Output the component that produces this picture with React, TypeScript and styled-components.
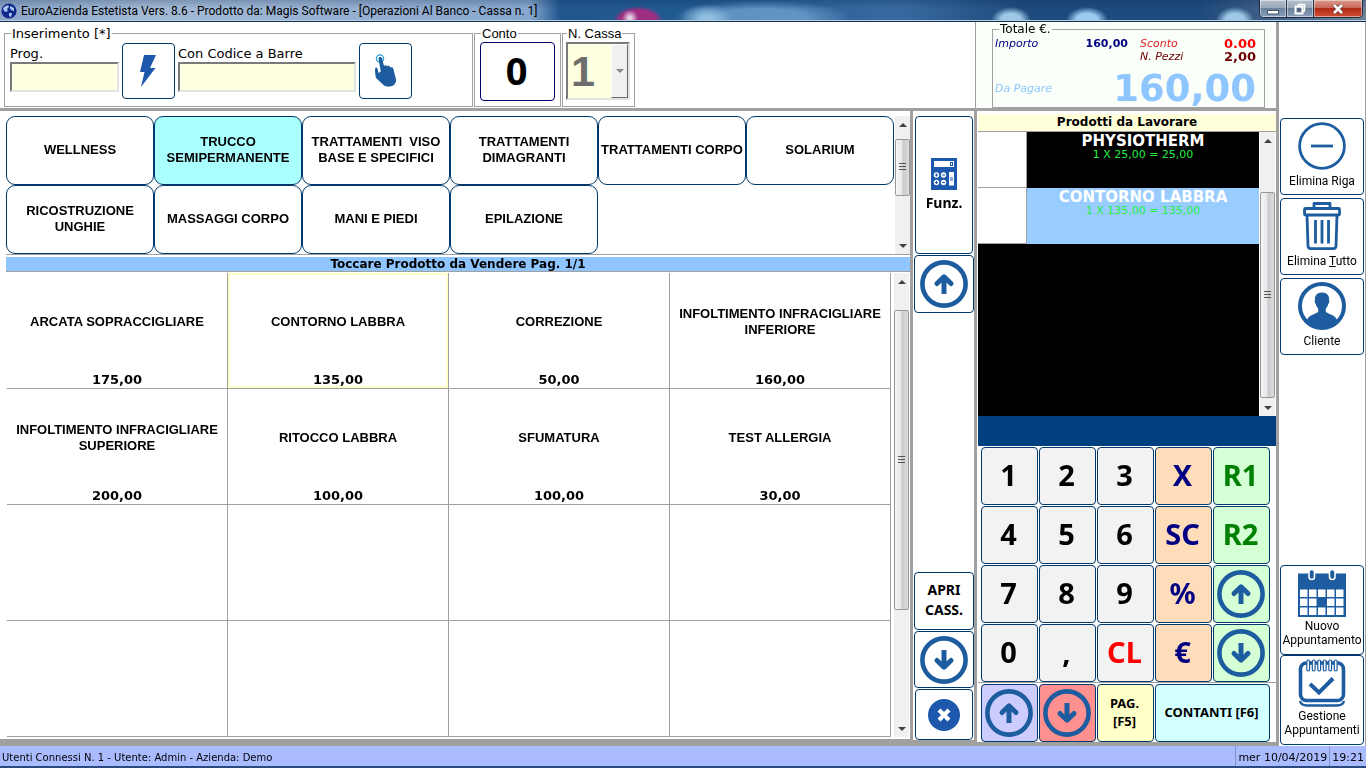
import React from "react";
import styled, { createGlobalStyle, css } from "styled-components";

const INK = "#00396b";
const BLUE = "#1c5c9f";
const GREY = "#a0a0a0";
const VERDANA = `Verdana, "DejaVu Sans", sans-serif`;
const ARIAL = `"Liberation Sans", Arial, sans-serif`;
const SEGOE = `"Noto Sans", "Open Sans", sans-serif`;
const TAHOMA = `Roboto, "Noto Sans", sans-serif`;

const GlobalStyle = createGlobalStyle`
  *, *::before, *::after { box-sizing: border-box; }
  body { margin: 0; background: #fff; color: #000; font-family: ${VERDANA}; font-size: 12px; }
  button, input, select { font: inherit; color: inherit; margin: 0; }
  button { padding: 0; cursor: pointer; }
`;

/* ---------- window ---------- */

const Window = styled.div`
  display: flex;
  flex-direction: column;
  min-height: 100vh;
`;

const TitleBar = styled.header`
  display: flex;
  align-items: center;
  height: 22px;
  padding: 0 3px 0 1px;
  border-bottom: 1px solid #14304f;
  box-shadow: inset 0 -1px 0 #b9cfe6;
  background:
    linear-gradient(rgba(10, 40, 80, 0.25), transparent 40%),
    radial-gradient(ellipse 8px 8px at 630px 18px, #e6cfe6 20%, transparent 100%),
    radial-gradient(ellipse 25px 14px at 638px 20px, #a02f82 70%, transparent 100%),
    radial-gradient(ellipse 26px 14px at 706px 18px, rgba(160, 205, 235, 0.8) 20%, transparent 100%),
    radial-gradient(ellipse 90px 18px at 762px 18px, rgba(110, 160, 205, 0.8) 50%, transparent 100%),
    radial-gradient(ellipse 20px 13px at 1011px 20px, #9cc8e6 50%, transparent 100%),
    radial-gradient(ellipse 21px 13px at 1087px 20px, #9ccbf2 50%, transparent 100%),
    radial-gradient(ellipse 19px 13px at 1235px 20px, #9cc8e6 50%, transparent 100%),
    linear-gradient(90deg, #8da6c8 0, #a3bad6 150px, #93add0 400px, #86a7cd 530px, #21578f 560px, #205990 680px, #386a9f 900px, #1f4a7d 1020px, #1f4a7d 1200px, #6f8096 100%);
`;

const TitleText = styled.h1`
  flex: 1;
  margin: 0 0 0 4px;
  font: 12px/20px ${TAHOMA};
  white-space: nowrap;
`;

const WindowButtons = styled.div`
  display: flex;
  align-self: flex-start;
  height: 18px;
  border: 1px solid #1c2f47;
  border-top: 0;
  border-radius: 0 0 5px 5px;
  overflow: hidden;
`;

const WindowButton = styled.button<{ $close?: boolean }>`
  display: flex;
  align-items: center;
  justify-content: center;
  width: ${(p) => (p.$close ? 48 : 27)}px;
  border: 0;
  border-right: ${(p) => (p.$close ? "0" : "1px solid #1c2f47")};
  box-shadow: inset 0 0 0 1px rgba(255, 255, 255, 0.45);
  background: ${(p) =>
    p.$close
      ? "linear-gradient(#d99a8c 0, #c9685a 45%, #b02a17 50%, #cf4f33 100%)"
      : "linear-gradient(#b4bfcc 0, #98a8ba 45%, #6c819b 50%, #8aa0ba 100%)"};
`;

const Body = styled.main`
  display: grid;
  grid-template-columns: minmax(0, 1fr) 87px;
  flex: 1;
`;

const Frame = styled.div`
  display: flex;
  flex-direction: column;
  border-right: 3px solid ${GREY};
  border-bottom: 4px solid ${GREY};
`;

/* ---------- top strip ---------- */

const TopStrip = styled.section`
  display: flex;
  height: 89px;
  border-bottom: 3px solid ${GREY};
`;

const Groups = styled.div`
  display: flex;
  flex: 1;
  gap: 1px;
  padding: 3px 0 0 4px;
`;

const Group = styled.fieldset<{ $width: number; $pad: number; $arial?: boolean }>`
  display: flex;
  width: ${(p) => p.$width}px;
  height: 82px;
  min-width: 0;
  margin: 0;
  padding: 0 ${(p) => p.$pad}px;
  border: 1px solid ${GREY};
  font-family: ${(p) => (p.$arial ? ARIAL : VERDANA)};

  legend {
    padding: 0 1px;
    margin-left: 1px;
    font-size: 13px;
    line-height: 17px;
  }
`;

const EntryRow = styled.div`
  display: flex;
  align-items: flex-start;
  gap: 3px;
`;

const Field = styled.label<{ $width: number }>`
  display: flex;
  flex-direction: column;
  width: ${(p) => p.$width}px;
  padding-top: 4px;
  font-size: 13px;
  line-height: 16px;

  input {
    height: 30px;
    width: 100%;
    padding: 0 2px;
    border: 2px solid;
    border-color: #7a7a7a #e3e3e3 #e3e3e3 #7a7a7a;
    border-radius: 0;
    background: #ffffe1;
    outline: 0;
    font-size: 16px;
  }
`;

const framed = css`
  display: flex;
  align-items: center;
  justify-content: center;
  border: 1px solid ${INK};
  border-radius: 4px;
  background: #fff;
`;

const EntryButton = styled.button`
  ${framed}
  width: 53px;
  height: 56px;
  margin-top: 1px;
`;

const AccountButton = styled.button`
  ${framed}
  width: 76px;
  height: 59px;
  padding: 0 2px 4px 0;
  border-color: #000066;
  font: bold 38px/50px ${SEGOE};
`;

const TillPicker = styled.div`
  display: flex;
  width: 64px;
  height: 58px;
  border: 2px solid;
  border-color: #7a7a7a #e3e3e3 #e3e3e3 #7a7a7a;
  background: #ffffe1;

  select {
    flex: 1;
    min-width: 0;
    padding: 0 0 0 3px;
    border: 0;
    background: transparent;
    appearance: none;
    color: #6d6d6d;
    opacity: 1;
    font: bold 43px/54px ${ARIAL};
  }
`;

const TillArrow = styled.span`
  display: flex;
  align-items: center;
  justify-content: center;
  width: 17px;
  border: 1px solid;
  border-color: #fff #696969 #696969 #fff;
  background: #f0f0f0;
`;

const TotalsArea = styled.div`
  width: 301px;
  padding: 0 11px 0 16px;
  border-left: 1px solid ${GREY};
  background: #fafffa;
`;

const Totals = styled.fieldset`
  display: grid;
  grid-template-columns: 84px 1fr 60px 56px;
  grid-template-rows: 13px 13px 1fr;
  height: 86px;
  min-width: 0;
  margin: 0;
  padding: 1px 8px 0 2px;
  border: 1px solid ${GREY};

  legend {
    padding: 0 1px;
    margin-left: 4px;
    font-size: 12px;
    line-height: 14px;
  }
`;

const TotalLabel = styled.span<{ $color: string; $col?: number }>`
  grid-column: ${(p) => p.$col ?? "auto"};
  color: ${(p) => p.$color};
  font-size: 11px;
  font-style: italic;
  line-height: 13px;
  white-space: nowrap;
`;

const TotalValue = styled.output<{ $color: string; $size: number }>`
  color: ${(p) => p.$color};
  font-size: ${(p) => p.$size}px;
  font-weight: 700;
  line-height: 13px;
  text-align: right;
`;

const DueRow = styled.div`
  display: flex;
  grid-column: 1 / -1;
  align-items: center;
  justify-content: space-between;
  padding-top: 7px;
  color: #8fc6ff;

  ${TotalValue} { line-height: 36px; }
`;

const Spaced = styled(TotalValue)`
  padding-right: 12px;
`;

/* ---------- workspace ---------- */

const Workspace = styled.div`
  display: grid;
  grid-template-columns: minmax(0, 1fr) 64px 299px;
  flex: 1;
`;

const Catalogue = styled.section`
  display: flex;
  flex-direction: column;
  padding: 5px 0 2px 6px;
  border-right: 3px solid ${GREY};
  border-bottom: 3px solid ${GREY};
`;

const CategoryRow = styled.div`
  display: flex;
  gap: 1px;
  border-bottom: 1px solid ${GREY};
`;

const CategoryGrid = styled.div`
  display: grid;
  flex: 1;
  grid-template-columns: repeat(6, minmax(0, 1fr));
  grid-auto-rows: 69px;
`;

const Category = styled.button<{ $active?: boolean }>`
  padding-bottom: 2px;
  border: 1px solid ${INK};
  border-radius: 9px;
  background: ${(p) => (p.$active ? "#aaffff" : "#fff")};
  font: bold 13px/16px ${ARIAL};
  white-space: pre;
`;

const Band = styled.h2<{ $tone: "blue" | "cream" }>`
  margin: 0;
  border-bottom: 1px solid ${GREY};
  background: ${(p) => (p.$tone === "blue" ? "#8fc6ff" : "#ffffd9")};
  font-size: 12px;
  text-align: center;
  line-height: ${(p) => (p.$tone === "blue" ? 14 : 17)}px;
  margin-top: ${(p) => (p.$tone === "blue" ? 2 : 3)}px;
`;

const ProductRow = styled.div`
  display: flex;
  flex: 1;
  gap: 3px;
  padding: 1px 1px 0 1px;
`;

const ProductGrid = styled.div`
  display: grid;
  flex: 1;
  grid-template-columns: repeat(4, minmax(0, 1fr));
  grid-template-rows: repeat(4, minmax(116px, 1fr));
`;

const Product = styled.button<{ $active?: boolean }>`
  display: flex;
  flex-direction: column;
  border: 0;
  border-right: 1px solid ${GREY};
  border-bottom: 1px solid ${GREY};
  background: #fff;
  box-shadow: ${(p) => (p.$active ? "inset 0 0 0 2px #ffffc8" : "none")};
`;

const ProductName = styled.span`
  display: flex;
  flex: 1;
  align-items: center;
  justify-content: center;
  width: 100%;
  padding-bottom: 2px;
  font: bold 13px/16px ${ARIAL};
  white-space: pre;
`;

const ProductPrice = styled.span`
  width: 100%;
  font-size: 13px;
  font-weight: 700;
  line-height: 16px;
`;

/* ---------- scroll bar ---------- */

const Scroll = styled.div`
  display: flex;
  flex-direction: column;
  align-items: center;
  width: 15px;
  background: #f0f0f0;
`;

const ScrollEnd = styled.span`
  display: flex;
  align-items: center;
  justify-content: center;
  height: 17px;
`;

const ScrollGap = styled.span<{ $grow: number }>`
  flex: ${(p) => p.$grow} 0 0;
`;

const Thumb = styled.span<{ $grow: number }>`
  display: flex;
  align-items: center;
  justify-content: center;
  flex: ${(p) => p.$grow} 0 0;
  width: 15px;
  border: 1px solid #979797;
  border-radius: 2px;
  background: linear-gradient(90deg, #f6f6f6 0, #e8e8ea 45%, #c9c9cd 55%, #dcdcdf 100%);
`;

function ScrollBar({ parts }: { parts: [number, number, number] }) {
  return (
    <Scroll aria-hidden>
      <ScrollEnd>
        <svg width="8" height="4"><path d="M0 4 L4 0 L8 4Z" fill="#404040" /></svg>
      </ScrollEnd>
      <ScrollGap $grow={parts[0]} />
      <Thumb $grow={parts[1]}>
        <svg width="7" height="8"><path d="M0 .5H7M0 3.5H7M0 6.5H7" stroke="#555" /></svg>
      </Thumb>
      <ScrollGap $grow={parts[2]} />
      <ScrollEnd>
        <svg width="8" height="4"><path d="M0 0 L4 4 L8 0Z" fill="#404040" /></svg>
      </ScrollEnd>
    </Scroll>
  );
}

/* ---------- tool column ---------- */

const ToolColumn = styled.nav`
  display: flex;
  flex-direction: column;
  gap: 1px;
  padding: 5px 0 0 1px;
  border-right: 3px solid ${GREY};
  border-bottom: 2px solid ${GREY};
`;

const ToolButton = styled.button<{ $height: number; $inset?: boolean; $push?: boolean }>`
  ${framed}
  flex-direction: column;
  gap: 3px;
  height: ${(p) => p.$height}px;
  padding-bottom: ${(p) => (p.$push ? 2 : 0)}px;
  margin: ${(p) => (p.$push ? "auto" : "0")} ${(p) => (p.$inset ? 1 : 0)}px 0;
  font: bold 14px/20px ${SEGOE};
  white-space: pre;
`;

/* ---------- till ---------- */

const Till = styled.section`
  display: flex;
  flex-direction: column;
  padding-left: 1px;
`;

const Receipt = styled.div`
  display: flex;
  flex: 1;
  padding-right: 1px;
`;

const ReceiptLines = styled.ul`
  flex: 1;
  margin: 0 1px 0 0;
  padding: 0;
  background: #000;
  list-style: none;
`;

const ReceiptLine = styled.li<{ $active?: boolean }>`
  display: flex;
  height: 56px;
  background: ${(p) => (p.$active ? "#99ccff" : "#000")};

  &::before {
    content: "";
    width: 49px;
    border-right: 1px solid ${GREY};
    border-bottom: 1px solid ${GREY};
    background: #fff;
  }
`;

const ReceiptText = styled.div`
  display: flex;
  flex: 1;
  flex-direction: column;
  align-items: center;
  padding-top: 2px;
  color: #22ee44;
  font-size: 11px;
  line-height: 12px;

  strong {
    color: #fff;
    font-size: 15px;
    line-height: 15px;
  }
`;

const Display = styled.div`
  height: 30px;
  background: #003f80;
`;

const Keys = styled.div<{ $last?: boolean }>`
  display: grid;
  grid-template-columns: repeat(5, 57px);
  grid-auto-rows: 58px;
  gap: 1px;
  padding: 1px 3px 0;
  border-top: ${(p) => (p.$last ? `1px solid ${GREY}` : "0")};
`;

const Key = styled.button<{ $bg?: string; $fg?: string; $small?: boolean; $wide?: boolean }>`
  ${framed}
  grid-column: ${(p) => (p.$wide ? "span 2" : "auto")};
  padding: 0 2px 2px 0;
  background: ${(p) => p.$bg ?? "#f2f2f2"};
  color: ${(p) => p.$fg ?? "#000"};
  font: bold ${(p) => (p.$small ? "13px/18px" : "29px/40px")} ${SEGOE};
  white-space: pre;
`;

const IconKey = styled(Key)`
  padding: 0 1px 0 0;
`;

/* ---------- side bar ---------- */

const SideBar = styled.nav`
  display: flex;
  flex-direction: column;
  gap: 3px;
  padding: 96px 1px 1px;
  border-right: 1px solid ${GREY};
`;

const SideButton = styled.button<{ $tall?: boolean }>`
  ${framed}
  flex-direction: column;
  justify-content: flex-start;
  height: ${(p) => (p.$tall ? 90 : 77)}px;
  padding-top: 3px;
  gap: ${(p) => (p.$tall ? 2 : 4)}px;
  font: 12px/14px ${TAHOMA};
  white-space: pre;
`;

const SideBottom = styled.div`
  display: flex;
  flex-direction: column;
  margin-top: auto;
`;

/* ---------- status ---------- */

const Status = styled.footer`
  display: flex;
  height: 22px;
  border-bottom: 2px solid #2b4a80;
  background: #aabcff;
  line-height: 23px;
`;

const StatusText = styled.span<{ $grow?: boolean }>`
  flex: ${(p) => (p.$grow ? 1 : "none")};
  padding: 0 2px;
  border-left: ${(p) => (p.$grow ? "0" : "1px solid #8492c4")};
  font-size: ${(p) => (p.$grow ? 10 : 11)}px;
  white-space: nowrap;
`;

/* ---------- icons ---------- */

function CircleArrow({ down }: { down?: boolean }) {
  return (
    <svg width="48" height="48" viewBox="0 0 48 48" fill="none" stroke={BLUE}>
      <circle cx="24" cy="24" r="21.6" strokeWidth="4.6" />
      <g transform={down ? "rotate(180 24 24)" : undefined} strokeWidth="5">
        <path d="M24 34V17" />
        <path d="M17 23.5L24 16.8L31 23.5" strokeLinecap="round" strokeLinejoin="round" />
      </g>
    </svg>
  );
}

const Globe = () => (
  <svg width="16" height="16" viewBox="0 0 16 16">
    <circle cx="8" cy="8" r="7.6" fill="#10298a" />
    <path d="M3 4L7 2L8 4L6 6L7 8L4 9L2 6ZM9 3L13 5L13 8L10 7L9 5ZM8 10L11 10L10 14L8 13Z" fill="#a9c6f2" />
  </svg>
);

const Bolt = () => (
  <svg width="20" height="32" viewBox="0 0 20 32">
    <path d="M5 0H17L11 13H16.500L2 32L5.500 17H1Z" fill="#1d58ad" />
  </svg>
);

const Hand = () => (
  <svg width="24" height="34" viewBox="0 0 24 34">
    <circle cx="6" cy="4.500" r="3.600" fill="none" stroke="#35a0d0" strokeWidth="1.400" />
    <path
      d="M4.500 4.500C4.500 2.600 7.500 2.600 8 4.500L10 12C11 10.800 12.600 11 13.200 12.200C14.400 11.400 16 12 16.400 13.400C17.800 12.900 19 13.600 19.400 15L22 25.500C22.300 27 22 28 21 29.500L20 31C17 33 12 33.200 9.500 31L2.500 24.500C1.200 23 .8 15 1.300 14C2.300 13 3.500 14 3.700 15.500L4.500 19L6.800 17.500Z"
      fill={BLUE}
    />
  </svg>
);

const Calculator = () => (
  <svg width="28" height="32" viewBox="0 0 28 32">
    <rect x="1" width="26" height="32" fill="#1d58ad" />
    <rect x="4" y="3" width="20" height="6" fill="#fff" />
    <path d="M20.500 4V8M22.500 4V8M20.500 4.500H22.500M20.500 7.500H22.500" stroke="#1d58ad" />
    <g fill="#fff">
      <circle cx="6.500" cy="17" r="2.700" /><circle cx="13.500" cy="17" r="2.700" />
      <circle cx="6.500" cy="24.500" r="2.700" /><circle cx="13.500" cy="24.500" r="2.700" />
      <rect x="19" y="14" width="5" height="13.500" />
    </g>
    <path d="M5 17H8M6.500 15.500V18.500M12 17H15M5 24.500H8M6.500 23V26M12 24.500H15M20 20H23M20 22H23" stroke="#1d58ad" />
  </svg>
);

const CrossDisc = () => (
  <svg width="32" height="32" viewBox="0 0 32 32">
    <circle cx="16" cy="16" r="16" fill="#1d58ad" />
    <path d="M11 11L21 21M21 11L11 21" stroke="#fff" strokeWidth="4.200" />
  </svg>
);

const MinusCircle = () => (
  <svg width="48" height="48" viewBox="0 0 48 48" fill="none" stroke={BLUE} strokeWidth="2.800">
    <circle cx="24" cy="24" r="22.400" />
    <path d="M13 24H35" />
  </svg>
);

const Trash = () => (
  <svg width="48" height="48" viewBox="0 0 48 48" fill="none" stroke={BLUE} strokeWidth="2.800" strokeLinejoin="round">
    <path d="M16 6.500V1.500H32V6.500" />
    <rect x="6.500" y="6.500" width="35" height="6.500" rx="1" />
    <path d="M9 13L10 44Q10.200 46.700 13 46.700H35Q37.800 46.700 38 44L39 13" />
    <path d="M17.500 18V41.500M24 18V41.500M30.500 18V41.500" />
  </svg>
);

const Person = () => (
  <svg width="48" height="48" viewBox="0 0 48 48">
    <circle cx="24" cy="24" r="22" fill="none" stroke={BLUE} strokeWidth="4" />
    <path
      d="M24 10.500C29 10.500 31.500 13.800 31 18C31.800 18.500 31.300 21 30.300 21.800C29.800 24 29 25.500 27.800 26.500V30C31 32.500 37 32.500 39 38C35 44 29 46 24 46S13 44 9 38C11 32.500 17 32.500 20.200 30V26.500C19 25.500 18.200 24 17.700 21.800C16.700 21 16.200 18.500 17 18C16.500 13.800 19 10.500 24 10.500Z"
      fill={BLUE}
    />
  </svg>
);

const CalendarGrid = () => (
  <svg width="48" height="48" viewBox="0 0 48 48">
    <path d="M0 4.500H48V48H0Z" fill={BLUE} />
    <g fill={BLUE} stroke="#fff" strokeWidth="1.600">
      <rect x="11" y=".5" width="5.500" height="10" rx="2.700" />
      <rect x="31.500" y=".5" width="5.500" height="10" rx="2.700" />
    </g>
    <g fill="#fff">
      {[20.5, 29.5, 38.5].map((y, r) =>
        [2, 11, 20, 29, 38].map((x, c) =>
          r === 1 && c === 2 ? null : <rect key={`${x}-${y}`} x={x} y={y} width="7.500" height="7.500" />,
        ),
      )}
    </g>
  </svg>
);

const CalendarCheck = () => (
  <svg width="48" height="48" viewBox="0 0 48 48" fill="none" stroke={BLUE}>
    <rect x="2.500" y="4" width="43" height="37.500" rx="6" strokeWidth="3.600" />
    <path d="M2 42C3 46 6 46.500 9 46.500H39C42 46.500 45 46 46 42" strokeWidth="2.400" />
    {[10, 15.5, 21, 26.5, 32, 37.5].map((x) => (
      <rect key={x} x={x - 1.2} y="1" width="2.800" height="11" rx="1.400" fill="#fff" strokeWidth="1.200" />
    ))}
    <path d="M12 25L21 33.500L35 19.500" strokeWidth="4" />
  </svg>
);

/* ---------- data ---------- */

const categories = [
  "WELLNESS", "TRUCCO\nSEMIPERMANENTE", "TRATTAMENTI  VISO\nBASE E SPECIFICI", "TRATTAMENTI\nDIMAGRANTI",
  "TRATTAMENTI CORPO", "SOLARIUM", "RICOSTRUZIONE\nUNGHIE", "MASSAGGI CORPO", "MANI E PIEDI", "EPILAZIONE",
];

const products: [string, string][] = [
  ["ARCATA SOPRACCIGLIARE", "175,00"],
  ["CONTORNO LABBRA", "135,00"],
  ["CORREZIONE", "50,00"],
  ["INFOLTIMENTO INFRACIGLIARE\nINFERIORE", "160,00"],
  ["INFOLTIMENTO INFRACIGLIARE\nSUPERIORE", "200,00"],
  ["RITOCCO LABBRA", "100,00"],
  ["SFUMATURA", "100,00"],
  ["TEST ALLERGIA", "30,00"],
  ...Array.from({ length: 8 }, (): [string, string] => ["", ""]),
];

const PEACH = "#ffddbb";
const MINT = "#d5ffd5";
const NAVY = "#000080";
const GREEN = "#008000";

const keys: { label: string; bg?: string; fg?: string }[] = [
  { label: "1" }, { label: "2" }, { label: "3" }, { label: "X", bg: PEACH, fg: NAVY }, { label: "R1", bg: MINT, fg: GREEN },
  { label: "4" }, { label: "5" }, { label: "6" }, { label: "SC", bg: PEACH, fg: NAVY }, { label: "R2", bg: MINT, fg: GREEN },
  { label: "7" }, { label: "8" }, { label: "9" }, { label: "%", bg: PEACH, fg: NAVY }, { label: "up", bg: MINT },
  { label: "0" }, { label: "," }, { label: "CL", fg: "#ff0000" }, { label: "€", bg: PEACH, fg: NAVY }, { label: "down", bg: MINT },
];

export default function App() {
  return (
    <Window>
      <GlobalStyle />
      <TitleBar>
        <Globe />
        <TitleText>EuroAzienda Estetista Vers. 8.6 - Prodotto da: Magis Software - [Operazioni Al Banco - Cassa n. 1]</TitleText>
        <WindowButtons>
          <WindowButton aria-label="Riduci">
            <svg width="12" height="12"><rect x=".5" y="7.500" width="11" height="3.500" fill="#fff" stroke="#45566b" /></svg>
          </WindowButton>
          <WindowButton aria-label="Ripristina">
            <svg width="12" height="12" fill="none">
              <path d="M4.500 3V1.500H10.500V8H9" stroke="#fff" strokeWidth="1.500" />
              <rect x="1.500" y="3.500" width="7" height="7" stroke="#fff" strokeWidth="2" />
              <rect x="4" y="6" width="2" height="2" stroke="#45566b" />
            </svg>
          </WindowButton>
          <WindowButton $close aria-label="Chiudi">
            <svg width="12" height="10" fill="none">
              <path d="M2 1L10 9M10 1L2 9" stroke="#5c3a3a" strokeWidth="4" />
              <path d="M2 1L10 9M10 1L2 9" stroke="#fff" strokeWidth="2.600" />
            </svg>
          </WindowButton>
        </WindowButtons>
      </TitleBar>

      <Body>
        <Frame>
          <TopStrip>
            <Groups>
              <Group $width={469} $pad={5}>
                <legend>Inserimento [*]</legend>
                <EntryRow>
                  <Field $width={109}>Prog.<input /></Field>
                  <EntryButton aria-label="Rapido"><Bolt /></EntryButton>
                  <Field $width={178}>Con Codice a Barre<input defaultValue="" autoFocus /></Field>
                  <EntryButton aria-label="Tocca"><Hand /></EntryButton>
                </EntryRow>
              </Group>
              <Group $width={87} $pad={5} $arial>
                <legend>Conto</legend>
                <AccountButton>0</AccountButton>
              </Group>
              <Group $width={73} $pad={3} $arial>
                <legend>N. Cassa</legend>
                <TillPicker>
                  <select disabled aria-label="N. Cassa"><option>1</option></select>
                  <TillArrow><svg width="8" height="4"><path d="M0 0H8L4 4Z" fill="#8a8a8a" /></svg></TillArrow>
                </TillPicker>
              </Group>
            </Groups>
            <TotalsArea>
              <Totals>
                <legend>Totale €.</legend>
                <TotalLabel $color={NAVY}>Importo</TotalLabel>
                <Spaced $color={NAVY} $size={11}>160,00</Spaced>
                <TotalLabel $color="#e02020">Sconto</TotalLabel>
                <TotalValue $color="#ff0000" $size={13}>0.00</TotalValue>
                <TotalLabel $color="#700000" $col={3}>N. Pezzi</TotalLabel>
                <TotalValue $color="#700000" $size={13}>2,00</TotalValue>
                <DueRow>
                  <TotalLabel $color="#8fc6ff">Da Pagare</TotalLabel>
                  <TotalValue $color="#8fc6ff" $size={37}>160,00</TotalValue>
                </DueRow>
              </Totals>
            </TotalsArea>
          </TopStrip>

          <Workspace>
            <Catalogue>
              <CategoryRow>
                <CategoryGrid>
                  {categories.map((c, i) => <Category key={c} $active={i === 1}>{c}</Category>)}
                </CategoryGrid>
                <ScrollBar parts={[6, 56, 42]} />
              </CategoryRow>
              <Band $tone="blue">Toccare Prodotto da Vendere Pag. 1/1</Band>
              <ProductRow>
                <ProductGrid>
                  {products.map(([name, price], i) => (
                    <Product key={i} $active={i === 1}>
                      <ProductName>{name}</ProductName>
                      <ProductPrice>{price}</ProductPrice>
                    </Product>
                  ))}
                </ProductGrid>
                <ScrollBar parts={[20, 299, 111]} />
              </ProductRow>
            </Catalogue>

            <ToolColumn>
              <ToolButton $height={138} $inset><Calculator />Funz.</ToolButton>
              <ToolButton $height={58} aria-label="Su"><CircleArrow /></ToolButton>
              <ToolButton $height={58} $push>{"APRI\nCASS."}</ToolButton>
              <ToolButton $height={57} aria-label="Giù"><CircleArrow down /></ToolButton>
              <ToolButton $height={51} $inset aria-label="Chiudi"><CrossDisc /></ToolButton>
            </ToolColumn>

            <Till>
              <Band $tone="cream">Prodotti da Lavorare</Band>
              <Receipt>
                <ReceiptLines>
                  <ReceiptLine>
                    <ReceiptText><strong>PHYSIOTHERM</strong>1 X 25,00 = 25,00</ReceiptText>
                  </ReceiptLine>
                  <ReceiptLine $active>
                    <ReceiptText><strong>CONTORNO LABBRA</strong>1 X 135,00 = 135,00</ReceiptText>
                  </ReceiptLine>
                </ReceiptLines>
                <ScrollBar parts={[43, 206, 1]} />
              </Receipt>
              <Display />
              <Keys>
                {keys.map((k) =>
                  k.label === "up" || k.label === "down" ? (
                    <IconKey key={k.label} $bg={k.bg} aria-label={k.label === "up" ? "Su" : "Giù"}>
                      <CircleArrow down={k.label === "down"} />
                    </IconKey>
                  ) : (
                    <Key key={k.label} $bg={k.bg} $fg={k.fg}>{k.label}</Key>
                  ),
                )}
              </Keys>
              <Keys $last>
                <IconKey $bg="#ccccff" aria-label="Precedente"><CircleArrow /></IconKey>
                <IconKey $bg="#ff9090" aria-label="Successivo"><CircleArrow down /></IconKey>
                <Key $bg="#ffffc8" $small>{"PAG.\n[F5]"}</Key>
                <Key $bg="#d2ffff" $small $wide>CONTANTI [F6]</Key>
              </Keys>
            </Till>
          </Workspace>
        </Frame>

        <SideBar>
          <SideButton><MinusCircle />Elimina Riga</SideButton>
          <SideButton><Trash /><span>Elimina <u>T</u>utto</span></SideButton>
          <SideButton><Person />Cliente</SideButton>
          <SideBottom>
            <SideButton $tall><CalendarGrid />{"Nuovo\nAppuntamento"}</SideButton>
            <SideButton $tall><CalendarCheck />{"Gestione\nAppuntamenti"}</SideButton>
          </SideBottom>
        </SideBar>
      </Body>

      <Status>
        <StatusText $grow>Utenti Connessi N. 1 - Utente: Admin - Azienda: Demo</StatusText>
        <StatusText>mer 10/04/2019</StatusText>
        <StatusText>19:21</StatusText>
      </Status>
    </Window>
  );
}
